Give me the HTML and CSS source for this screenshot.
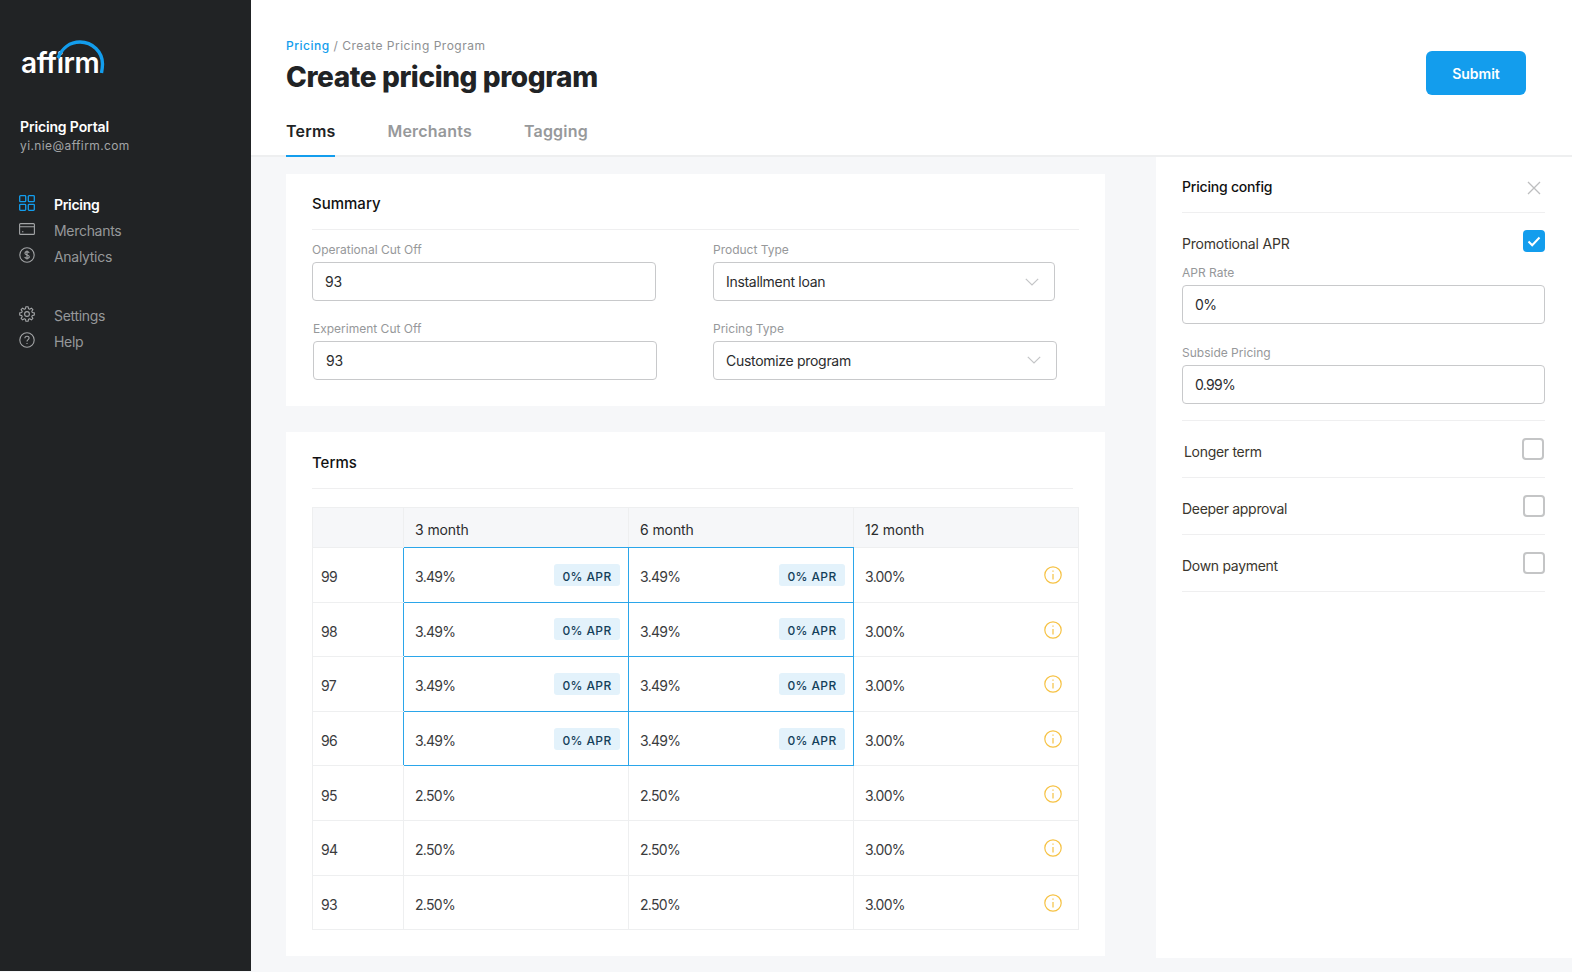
FILE: index.html
```html
<!DOCTYPE html>
<html lang="en">
<head>
    <meta charset="UTF-8">
    <title>Create pricing program</title>
    <link rel="stylesheet" href="styles.css">
</head>
<body>
    <div class="app">
        <aside class="sidebar">
            <div class="logo">
                <span class="logo-text">affirm</span>
                <svg class="logo-arc" width="52" height="36" viewBox="0 0 52 36"><path d="M4 19C8 9 16 3 26 3c12.500 0 22.500 10 22.500 22 0 3-.5 6-1 9" fill="none" stroke="#139ded" stroke-width="3.400"/></svg>
            </div>
            <div class="portal">
                <div class="portal-name">Pricing Portal</div>
                <div class="portal-mail">yi.nie@affirm.com</div>
            </div>
            <nav class="nav">
                <a class="nav-item active">
                    <svg width="16" height="16" viewBox="0 0 16 16" fill="none" stroke="#139ded" stroke-width="1.3"><rect x=".7" y=".7" width="6" height="6" rx=".8"/><rect x="9.3" y=".7" width="6" height="6" rx=".8"/><rect x=".7" y="9.3" width="6" height="6" rx=".8"/><rect x="9.3" y="9.3" width="6" height="6" rx=".8"/></svg>
                    Pricing
                </a>
                <a class="nav-item">
                    <svg width="16" height="16" viewBox="0 0 16 16" fill="none" stroke="#a3a5a7" stroke-width="1.1"><rect x=".6" y="2.6" width="14.8" height="10.8" rx="1"/><path d="M.6 5.8h14.8M3 10.8h1.4"/></svg>
                    Merchants
                </a>
                <a class="nav-item">
                    <svg width="16" height="16" viewBox="0 0 16 16" fill="none" stroke="#a3a5a7" stroke-width="1.1"><circle cx="8" cy="8" r="7.2"/><path d="M10.2 5.9c-.3-.8-1.1-1.3-2.2-1.3-1.2 0-2.1.6-2.1 1.6 0 2.3 4.4 1.2 4.4 3.6 0 1-.9 1.6-2.3 1.600-1.200 0-2-.5-2.300-1.400M8 3.400v9.200"/></svg>
                    Analytics
                </a>
                <a class="nav-item nav-gap">
                    <svg width="16" height="16" viewBox="0 0 16 16" fill="none" stroke="#a3a5a7" stroke-width="1.1"><circle cx="8" cy="8" r="2.4"/><path d="M6.9.7h2.2l.4 2 1.2.5 1.7-1.1 1.5 1.5-1.1 1.7.5 1.2 2 .4v2.2l-2 .4-.5 1.2 1.1 1.7-1.5 1.5-1.7-1.1-1.2.5-.4 2H6.9l-.4-2-1.2-.5-1.7 1.1-1.5-1.5 1.1-1.7-.5-1.2-2-.4V6.900l2-.4.5-1.200-1.100-1.700 1.500-1.500 1.700 1.100 1.200-.5z" stroke-linejoin="round"/></svg>
                    Settings
                </a>
                <a class="nav-item">
                    <svg width="16" height="16" viewBox="0 0 16 16" fill="none" stroke="#a3a5a7" stroke-width="1.1"><circle cx="8" cy="8" r="7.2"/><path d="M5.9 6.2c0-1.2.9-2 2.1-2s2.1.8 2.1 1.9c0 1.6-2.1 1.6-2.1 3.4M8 11v1.1"/></svg>
                    Help
                </a>
            </nav>
        </aside>

        <div class="main">
            <header class="header">
                <div class="header-top">
                    <div>
                        <div class="crumbs"><a>Pricing</a> / Create Pricing Program</div>
                        <h1>Create pricing program</h1>
                    </div>
                    <button class="submit">Submit</button>
                </div>
                <div class="tabs">
                    <a class="tab active">Terms</a>
                    <a class="tab">Merchants</a>
                    <a class="tab">Tagging</a>
                </div>
            </header>

            <div class="content">
                <div class="cards">
                    <section class="card summary">
                        <h2>Summary</h2>
                        <div class="form-grid">
                            <div class="field">
                                <label>Operational Cut Off</label>
                                <div class="input">93</div>
                            </div>
                            <div class="field field-short">
                                <label>Product Type</label>
                                <div class="input select">Installment loan
                                    <svg width="14" height="8" viewBox="0 0 14 8" fill="none" stroke="#c4c5c7" stroke-width="1.2"><path d="M.8.8 7 7l6.2-6.2"/></svg>
                                </div>
                            </div>
                            <div class="field field-nudge">
                                <label>Experiment Cut Off</label>
                                <div class="input">93</div>
                            </div>
                            <div class="field">
                                <label>Pricing Type</label>
                                <div class="input select">Customize program
                                    <svg width="14" height="8" viewBox="0 0 14 8" fill="none" stroke="#c4c5c7" stroke-width="1.2"><path d="M.8.8 7 7l6.2-6.2"/></svg>
                                </div>
                            </div>
                        </div>
                    </section>

                    <section class="card terms">
                        <h2>Terms</h2>
                        <table class="terms-table">
                            <thead>
                                <tr><th></th><th>3 month</th><th>6 month</th><th>12 month</th></tr>
                            </thead>
                            <tbody>
                                <tr>
                                    <td>99</td>
                                    <td class="promo"><div class="cell">3.49%<span class="badge">0% APR</span></div></td>
                                    <td class="promo"><div class="cell">3.49%<span class="badge">0% APR</span></div></td>
                                    <td><div class="cell">3.00%<svg class="info" width="18" height="18" viewBox="0 0 18 18" fill="none" stroke="#f6c244" stroke-width="1.2"><circle cx="9" cy="9" r="8.2"/><path d="M9 8v5.4M9 4.6v1.2"/></svg></div></td>
                                </tr>
                                <tr>
                                    <td>98</td>
                                    <td class="promo"><div class="cell">3.49%<span class="badge">0% APR</span></div></td>
                                    <td class="promo"><div class="cell">3.49%<span class="badge">0% APR</span></div></td>
                                    <td><div class="cell">3.00%<svg class="info" width="18" height="18" viewBox="0 0 18 18" fill="none" stroke="#f6c244" stroke-width="1.2"><circle cx="9" cy="9" r="8.2"/><path d="M9 8v5.4M9 4.6v1.2"/></svg></div></td>
                                </tr>
                                <tr>
                                    <td>97</td>
                                    <td class="promo"><div class="cell">3.49%<span class="badge">0% APR</span></div></td>
                                    <td class="promo"><div class="cell">3.49%<span class="badge">0% APR</span></div></td>
                                    <td><div class="cell">3.00%<svg class="info" width="18" height="18" viewBox="0 0 18 18" fill="none" stroke="#f6c244" stroke-width="1.2"><circle cx="9" cy="9" r="8.2"/><path d="M9 8v5.4M9 4.6v1.2"/></svg></div></td>
                                </tr>
                                <tr>
                                    <td>96</td>
                                    <td class="promo"><div class="cell">3.49%<span class="badge">0% APR</span></div></td>
                                    <td class="promo"><div class="cell">3.49%<span class="badge">0% APR</span></div></td>
                                    <td><div class="cell">3.00%<svg class="info" width="18" height="18" viewBox="0 0 18 18" fill="none" stroke="#f6c244" stroke-width="1.2"><circle cx="9" cy="9" r="8.2"/><path d="M9 8v5.4M9 4.6v1.2"/></svg></div></td>
                                </tr>
                                <tr>
                                    <td>95</td>
                                    <td><div class="cell">2.50%</div></td>
                                    <td><div class="cell">2.50%</div></td>
                                    <td><div class="cell">3.00%<svg class="info" width="18" height="18" viewBox="0 0 18 18" fill="none" stroke="#f6c244" stroke-width="1.2"><circle cx="9" cy="9" r="8.2"/><path d="M9 8v5.4M9 4.6v1.2"/></svg></div></td>
                                </tr>
                                <tr>
                                    <td>94</td>
                                    <td><div class="cell">2.50%</div></td>
                                    <td><div class="cell">2.50%</div></td>
                                    <td><div class="cell">3.00%<svg class="info" width="18" height="18" viewBox="0 0 18 18" fill="none" stroke="#f6c244" stroke-width="1.2"><circle cx="9" cy="9" r="8.2"/><path d="M9 8v5.4M9 4.6v1.2"/></svg></div></td>
                                </tr>
                                <tr>
                                    <td>93</td>
                                    <td><div class="cell">2.50%</div></td>
                                    <td><div class="cell">2.50%</div></td>
                                    <td><div class="cell">3.00%<svg class="info" width="18" height="18" viewBox="0 0 18 18" fill="none" stroke="#f6c244" stroke-width="1.2"><circle cx="9" cy="9" r="8.2"/><path d="M9 8v5.4M9 4.6v1.2"/></svg></div></td>
                                </tr>
                            </tbody>
                        </table>
                    </section>
                </div>

                <aside class="config">
                    <div class="config-head">
                        <h2>Pricing config</h2>
                        <svg width="14" height="14" viewBox="0 0 14 14" stroke="#bdbebf" stroke-width="1.3"><path d="M1 1l12 12M13 1 1 13"/></svg>
                    </div>
                    <div class="config-promo">
                        <div class="check-row">
                            <span>Promotional APR</span>
                            <span class="checkbox checked">
                                <svg width="14" height="11" viewBox="0 0 14 11" fill="none" stroke="#fff" stroke-width="2"><path d="M1.500 5.500 5.200 9.200 12.500 1.500"/></svg>
                            </span>
                        </div>
                        <div class="field">
                            <label>APR Rate</label>
                            <div class="input num">0%</div>
                        </div>
                        <div class="field">
                            <label>Subside Pricing</label>
                            <div class="input num">0.99%</div>
                        </div>
                    </div>
                    <div class="option option-nudge"><span>Longer term</span><span class="checkbox"></span></div>
                    <div class="option"><span>Deeper approval</span><span class="checkbox"></span></div>
                    <div class="option"><span>Down payment</span><span class="checkbox"></span></div>
                </aside>
            </div>
        </div>
    </div>
</body>
</html>
```

FILE: styles.css
```css
* {
    box-sizing: border-box;
}
html, body {
    margin: 0;
    height: 100%;
    overflow: hidden;
}
body {
    font-family: "Inter", "Liberation Sans", sans-serif;
    font-size: 14px;
    color: #2b2c2e;
    background-color: #f6f7f9;
}
h1, h2 {
    margin: 0;
}
.app {
    display: flex;
    height: 972px;
}

/* Sidebar */
.sidebar {
    width: 251px;
    height: 971px;
    flex-shrink: 0;
    background-color: #212325;
    padding: 0 20px;
}
.logo {
    position: relative;
    height: 117px;
    margin-left: -20px;
    padding: 47px 0 0 21px;
}
.logo-text {
    font-size: 28px;
    font-weight: 600;
    color: #fff;
    letter-spacing: -0.4px;
    line-height: 32px;
}
.logo-arc {
    position: absolute;
    left: 54px;
    top: 39px;
}
.portal-name {
    font-size: 14px;
    font-weight: 600;
    line-height: 20px;
    letter-spacing: -0.15px;
    color: #fff;
}
.portal-mail {
    font-size: 12px;
    line-height: 17px;
    letter-spacing: 0.4px;
    color: #a3a5a7;
}
.nav {
    margin-top: 37px;
}
.nav-item {
    display: flex;
    align-items: center;
    gap: 19px;
    height: 26px;
    color: #96989a;
    font-size: 14px;
    letter-spacing: -0.3px;
}
.nav-item svg {
    margin: -2px 0 0 -1px;
}
.nav-item.active {
    color: #fff;
    font-weight: 600;
}
.nav-gap {
    margin-top: 33px;
}

/* Page header */
.main {
    flex: 1;
    min-width: 0;
    display: flex;
    flex-direction: column;
}
.header {
    height: 157px;
    flex-shrink: 0;
    background-color: #fff;
    border-bottom: 2px solid #eeeff0;
    padding: 38px 46px 0 35px;
}
.header-top {
    display: flex;
    justify-content: space-between;
    height: 81px;
}
.crumbs {
    font-size: 12px;
    line-height: 16px;
    letter-spacing: 0.5px;
    color: #8e9092;
}
.crumbs a {
    color: #139ded;
    font-weight: 500;
}
h1 {
    font-size: 28px;
    font-weight: 800;
    line-height: 36px;
    color: #212325;
    margin-top: 5px;
    letter-spacing: -0.4px;
}
.submit {
    width: 100px;
    height: 44px;
    margin-top: 13px;
    background-color: #139ded;
    color: white;
    border: none;
    border-radius: 6px;
    font-family: inherit;
    font-size: 14px;
    font-weight: 600;
}
.tabs {
    display: flex;
    gap: 52px;
}
.tab {
    height: 38px;
    line-height: 24px;
    font-size: 16px;
    font-weight: 600;
    letter-spacing: 0.2px;
    color: #97999b;
    border-bottom: 2px solid transparent;
}
.tab.active {
    color: #212325;
    border-bottom-color: #139ded;
}

/* Content */
.content {
    flex: 1;
    display: flex;
    min-height: 0;
}
.cards {
    width: 905px;
    padding: 17px 0 0 35px;
}
.card {
    width: 819px;
    background-color: #fff;
    padding: 0 26px;
}
.card h2 {
    font-size: 15px;
    font-weight: 500;
    color: #111;
    height: 56px;
    line-height: 60px;
    border-bottom: 1px solid #efeff0;
}
.summary {
    height: 232px;
    margin-bottom: 26px;
}
.form-grid {
    display: grid;
    grid-template-columns: 344px 344px;
    column-gap: 57px;
    row-gap: 16.5px;
    padding-top: 9px;
}
.field label {
    display: block;
    font-size: 12px;
    line-height: 22px;
    margin-bottom: 1px;
    color: #96989a;
}
.field-nudge {
    margin: 0 -1px 0 1px;
}
.field-short {
    margin-right: 2px;
}
.input {
    display: flex;
    align-items: center;
    justify-content: space-between;
    height: 39px;
    border: 1px solid #c8c9cb;
    border-radius: 4px;
    padding: 0 12px;
    font-size: 14px;
    letter-spacing: -0.3px;
    color: #2b2c2e;
    background-color: #fff;
}
.input.num {
    letter-spacing: -0.7px;
}
.input.select {
    padding-right: 15px;
}
.terms {
    height: 524px;
}
.terms h2 {
    height: 57px;
    margin-right: 6px;
    line-height: 62px;
}

/* Terms table */
.terms-table {
    width: 767px;
    margin-top: 18px;
    border-collapse: collapse;
    table-layout: fixed;
}
.terms-table th {
    height: 40px;
    background-color: #f6f7f9;
    border: 1px solid #eeeff0;
    text-align: left;
    font-weight: 400;
    font-size: 14px;
    letter-spacing: -0.1px;
    padding: 3px 11px 0;
    color: #2b2c2e;
}
.terms-table th:first-child {
    width: 91px;
}
.terms-table th:nth-child(2),
.terms-table th:nth-child(3) {
    width: 225px;
    border-bottom-color: #2ba6ea;
}
.terms-table td {
    height: 54.6px;
    border: 1px solid #eeeff0;
    padding: 4px 8px 0;
    font-size: 14px;
    letter-spacing: -0.7px;
    color: #3a3b3d;
}
.terms-table td.promo {
    border: 1px solid #2ba6ea;
}
.terms-table tbody tr:nth-child(-n+4) td:first-child {
    border-right-color: #2ba6ea;
}
.terms-table td:nth-child(n+2) {
    padding-left: 11px;
    padding-right: 9px;
}
.terms-table td.promo {
    padding-right: 8px;
}
.cell {
    display: flex;
    align-items: center;
    justify-content: space-between;
}
.badge {
    width: 66px;
    height: 22px;
    margin-top: -4px;
    line-height: 25px;
    text-align: center;
    background-color: #e3f2fb;
    border-radius: 3px;
    color: #143f5a;
    font-size: 12px;
    font-weight: 500;
    letter-spacing: 0.4px;
}
.info {
    margin: -3px 7px 0 0;
}

/* Pricing config */
.config {
    width: 416px;
    height: 801px;
    background-color: #fff;
    padding: 0 27px 0 26px;
}
.config-head {
    display: flex;
    align-items: center;
    justify-content: space-between;
    height: 56px;
    border-bottom: 1px solid #efeff0;
    padding: 6px 4px 0 0;
}
.config-head h2 {
    font-size: 14px;
    font-weight: 500;
    letter-spacing: -0.2px;
    color: #111;
    margin-top: -3px;
}
.config-promo {
    height: 208px;
    border-bottom: 1px solid #efeff0;
    padding-top: 17px;
    letter-spacing: -0.2px;
}
.check-row {
    display: flex;
    justify-content: space-between;
    height: 34px;
    line-height: 28px;
    color: #3a362e;
}
.config-promo .field {
    margin-bottom: 20px;
}
.config-promo .field label {
    line-height: 18px;
    margin-bottom: 3px;
    letter-spacing: 0;
}
.option {
    display: flex;
    align-items: center;
    justify-content: space-between;
    height: 57px;
    border-bottom: 1px solid #efeff0;
    padding-top: 4px;
    letter-spacing: -0.3px;
    color: #3a362e;
}
.option-nudge {
    padding-left: 2px;
    padding-right: 1px;
}
.checkbox {
    display: flex;
    align-items: center;
    justify-content: center;
    width: 22px;
    height: 22px;
    margin-top: -4px;
    border: 2px solid #c4c5c6;
    border-radius: 4px;
}
.checkbox.checked {
    background-color: #139ded;
    border-color: #139ded;
    margin-top: 0;
}
```
